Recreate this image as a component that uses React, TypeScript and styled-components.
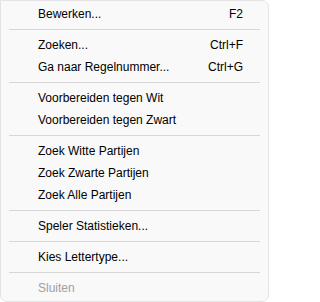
import React from 'react';
import styled, { createGlobalStyle } from 'styled-components';

const GlobalStyle = createGlobalStyle`
  html, body {
    margin: 0;
    padding: 0;
    background: #ffffff;
  }
  body {
    font-family: 'Liberation Sans', Arial, sans-serif;
  }
`;

const Menu = styled.div`
  box-sizing: border-box;
  width: 269px;
  height: 302px;
  background: #f9f9f9;
  border: 1px solid #e3e3e3;
  border-radius: 0 7px 7px 7px;
  padding: 2px 0;
  display: flex;
  flex-direction: column;
`;

const Item = styled.div<{ $disabled?: boolean }>`
  height: 22px;
  display: flex;
  align-items: center;
  justify-content: space-between;
  padding: 0 25px 0 37px;
  font-size: 12px;
  color: ${p => (p.$disabled ? '#a0a0a0' : '#000000')};
  white-space: nowrap;
`;

const Shortcut = styled.span`
  color: #000000;
`;

const Separator = styled.div`
  height: 1px;
  margin: 4px 8px 4px 8px;
  background: #d7d7d7;
`;

type Entry = { label: string; shortcut?: string; disabled?: boolean } | 'sep';

const entries: Entry[] = [
  { label: 'Bewerken...', shortcut: 'F2' },
  'sep',
  { label: 'Zoeken...', shortcut: 'Ctrl+F' },
  { label: 'Ga naar Regelnummer...', shortcut: 'Ctrl+G' },
  'sep',
  { label: 'Voorbereiden tegen Wit' },
  { label: 'Voorbereiden tegen Zwart' },
  'sep',
  { label: 'Zoek Witte Partijen' },
  { label: 'Zoek Zwarte Partijen' },
  { label: 'Zoek Alle Partijen' },
  'sep',
  { label: 'Speler Statistieken...' },
  'sep',
  { label: 'Kies Lettertype...' },
  'sep',
  { label: 'Sluiten', disabled: true },
];

const App: React.FC = () => {
  return (
    <>
      <GlobalStyle />
      <Menu>
        {entries.map((e, i) =>
          e === 'sep' ? (
            <Separator key={i} />
          ) : (
            <Item key={i} $disabled={e.disabled}>
              <span>{e.label}</span>
              {e.shortcut && <Shortcut>{e.shortcut}</Shortcut>}
            </Item>
          )
        )}
      </Menu>
    </>
  );
};

export default App;
